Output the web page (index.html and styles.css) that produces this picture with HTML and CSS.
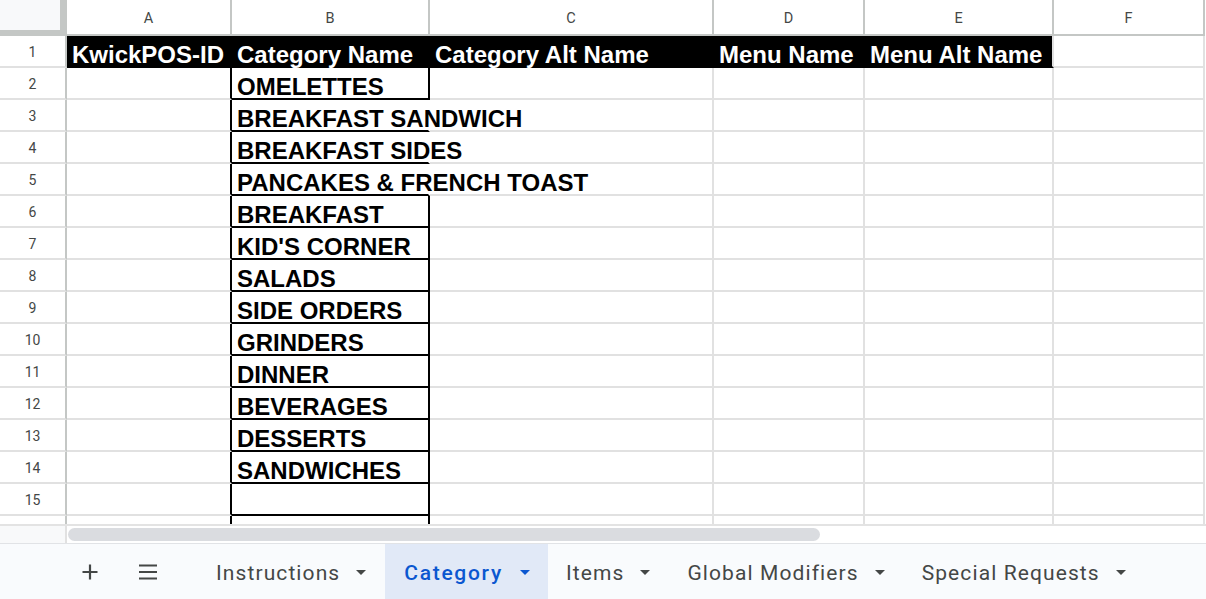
FILE: index.html
```html
<!DOCTYPE html>
<html lang="en">
<head>
    <meta charset="UTF-8">
    <title>Category - Sheet</title>
    <link rel="stylesheet" href="styles.css">
</head>
<body>
    <div class="sheet">
        <!-- column headers -->
        <div class="corner"><div class="corner-fill"></div></div>
        <div class="hd">A</div>
        <div class="hd">B</div>
        <div class="hd">C</div>
        <div class="hd">D</div>
        <div class="hd">E</div>
        <div class="hd">F</div>

        <!-- row 1 -->
        <div class="rn">1</div>
        <div class="c blk">KwickPOS-ID</div>
        <div class="c blk">Category Name</div>
        <div class="c blk">Category Alt Name</div>
        <div class="c blk">Menu Name</div>
        <div class="c blk blk-end">Menu Alt Name</div>
        <div class="c"></div>

        <!-- row 2 -->
        <div class="rn">2</div>
        <div class="c edge"></div>
        <div class="c bx">OMELETTES</div>
        <div class="c"></div><div class="c"></div><div class="c"></div><div class="c"></div>

        <!-- row 3 -->
        <div class="rn">3</div>
        <div class="c edge"></div>
        <div class="c bx ov">BREAKFAST SANDWICH</div>
        <div class="c"></div><div class="c"></div><div class="c"></div><div class="c"></div>

        <!-- row 4 -->
        <div class="rn">4</div>
        <div class="c edge"></div>
        <div class="c bx ov">BREAKFAST SIDES</div>
        <div class="c"></div><div class="c"></div><div class="c"></div><div class="c"></div>

        <!-- row 5 -->
        <div class="rn">5</div>
        <div class="c edge"></div>
        <div class="c bx ov">PANCAKES &amp; FRENCH TOAST</div>
        <div class="c"></div><div class="c"></div><div class="c"></div><div class="c"></div>

        <!-- row 6 -->
        <div class="rn">6</div>
        <div class="c edge"></div>
        <div class="c bx">BREAKFAST</div>
        <div class="c"></div><div class="c"></div><div class="c"></div><div class="c"></div>

        <!-- row 7 -->
        <div class="rn">7</div>
        <div class="c edge"></div>
        <div class="c bx">KID'S CORNER</div>
        <div class="c"></div><div class="c"></div><div class="c"></div><div class="c"></div>

        <!-- row 8 -->
        <div class="rn">8</div>
        <div class="c edge"></div>
        <div class="c bx">SALADS</div>
        <div class="c"></div><div class="c"></div><div class="c"></div><div class="c"></div>

        <!-- row 9 -->
        <div class="rn">9</div>
        <div class="c edge"></div>
        <div class="c bx">SIDE ORDERS</div>
        <div class="c"></div><div class="c"></div><div class="c"></div><div class="c"></div>

        <!-- row 10 -->
        <div class="rn">10</div>
        <div class="c edge"></div>
        <div class="c bx">GRINDERS</div>
        <div class="c"></div><div class="c"></div><div class="c"></div><div class="c"></div>

        <!-- row 11 -->
        <div class="rn">11</div>
        <div class="c edge"></div>
        <div class="c bx">DINNER</div>
        <div class="c"></div><div class="c"></div><div class="c"></div><div class="c"></div>

        <!-- row 12 -->
        <div class="rn">12</div>
        <div class="c edge"></div>
        <div class="c bx">BEVERAGES</div>
        <div class="c"></div><div class="c"></div><div class="c"></div><div class="c"></div>

        <!-- row 13 -->
        <div class="rn">13</div>
        <div class="c edge"></div>
        <div class="c bx">DESSERTS</div>
        <div class="c"></div><div class="c"></div><div class="c"></div><div class="c"></div>

        <!-- row 14 -->
        <div class="rn">14</div>
        <div class="c edge"></div>
        <div class="c bx">SANDWICHES</div>
        <div class="c"></div><div class="c"></div><div class="c"></div><div class="c"></div>

        <!-- row 15 -->
        <div class="rn">15</div>
        <div class="c edge"></div>
        <div class="c bx"></div>
        <div class="c"></div><div class="c"></div><div class="c"></div><div class="c"></div>

        <!-- row 16, cut off by the scrollbar -->
        <div class="rn last"></div>
        <div class="c edge last"></div>
        <div class="c bx last"></div>
        <div class="c last"></div><div class="c last"></div><div class="c last"></div><div class="c last"></div>
    </div>

    <div class="scroll-row">
        <div class="scroll-corner"></div>
        <div class="scroll-thumb"></div>
    </div>

    <footer class="tabbar">
        <button class="tool" title="Add sheet">
            <svg width="16" height="16" viewBox="0 0 16 16"><path d="M8 0.5v15M0.5 8h15" stroke="#444746" stroke-width="2.2" fill="none"/></svg>
        </button>
        <button class="tool" title="All sheets">
            <svg width="18" height="16" viewBox="0 0 18 16"><path d="M0 1.5h18M0 8h18M0 14.5h18" stroke="#444746" stroke-width="2.2" fill="none"/></svg>
        </button>

        <div class="tabs">
            <div class="tab"><span>Instructions</span><span class="caret"></span></div>
            <div class="tab active"><span>Category</span><span class="caret"></span></div>
            <div class="tab"><span>Items</span><span class="caret"></span></div>
            <div class="tab"><span>Global Modifiers</span><span class="caret"></span></div>
            <div class="tab"><span>Special Requests</span><span class="caret"></span></div>
        </div>
    </footer>
</body>
</html>
```

FILE: styles.css
```css
/* General */
body {
    margin: 0;
    width: 1206px;
    height: 599px;
    overflow: hidden;
    background: #fff;
    font-family: Roboto, "Liberation Sans", sans-serif;
}

/* Grid of cells */
.sheet {
    display: grid;
    grid-template-columns: 67px 165px 198px 284px 151px 189px 151px;
    grid-template-rows: 36px repeat(15, 32px) 8px;
    height: 524px;
    overflow: hidden;
}

.corner {
    background: #c4c7c5;
}

.corner-fill {
    width: 60px;
    height: 30px;
    background: #f8f9fa;
}

.hd {
    display: flex;
    align-items: center;
    justify-content: center;
    padding-top: 3px;
    box-sizing: border-box;
    border-right: 2px solid #c4c7c5;
    border-bottom: 2px solid #c4c7c5;
    font-size: 14.5px;
    color: #444746;
}

.rn {
    display: flex;
    align-items: center;
    justify-content: center;
    padding-top: 2px;
    box-sizing: border-box;
    border-right: 2px solid #c4c7c5;
    border-bottom: 2px solid #e1e1e1;
    font-size: 14px;
    color: #444746;
}

.c {
    display: flex;
    align-items: flex-end;
    box-sizing: border-box;
    padding-left: 5px;
    border-right: 2px solid #e1e1e1;
    border-bottom: 2px solid #e1e1e1;
    font-family: "Liberation Sans", Arial, sans-serif;
    font-weight: bold;
    font-size: 24px;
    line-height: 22px;
    white-space: nowrap;
    color: #000;
}

/* Header row */
.blk {
    background: #000;
    color: #fff;
    border-color: #000;
}

.blk-end {
    border-right-color: #e1e1e1;
}

/* Boxed category column */
.edge {
    border-right-color: #000;
}

.bx {
    border-right-color: #000;
    border-bottom-color: #000;
}

.ov {
    border-right-color: transparent; /* text spills into C */
}

.last {
    border-bottom: none;
}

/* Horizontal scrollbar */
.scroll-row {
    display: flex;
    height: 19px;
    box-sizing: border-box;
    border-top: 2px solid #e3e3e3;
}

.scroll-corner {
    width: 67px;
    box-sizing: border-box;
    background: #f8f9fa;
    border-right: 2px solid #e1e1e1;
}

.scroll-thumb {
    width: 752px;
    height: 13px;
    margin: 2px 0 0 1px;
    border-radius: 7px;
    background: #dadce0;
}

/* Sheet tabs */
.tabbar {
    display: flex;
    align-items: stretch;
    height: 56px;
    box-sizing: border-box;
    border-top: 1px solid #e1e3e6;
    background: #f9fbfd;
    padding-left: 70px;
}

.tool {
    width: 40px;
    margin-right: 18px;
    border: none;
    background: none;
    padding: 0;
    display: flex;
    align-items: center;
    justify-content: center;
}

.tabs {
    display: flex;
    margin-left: 12px;
}

.tab {
    display: flex;
    align-items: center;
    padding: 2px 19px 0 18px;
    font-size: 21px;
    letter-spacing: 1.1px;
    color: #444746;
    white-space: nowrap;
}

.caret {
    width: 0;
    height: 0;
    margin-left: 16px;
    border-left: 5px solid transparent;
    border-right: 5px solid transparent;
    border-top: 5px solid #444746;
}

.tab.active {
    padding-left: 19px;
    padding-right: 18px;
    background: #e1e9f7;
    color: #0b57d0;
    font-weight: 500;
    letter-spacing: 1.7px;
}

.tab.active .caret {
    margin-left: 17px;
    border-top-color: #0b57d0;
}
```
